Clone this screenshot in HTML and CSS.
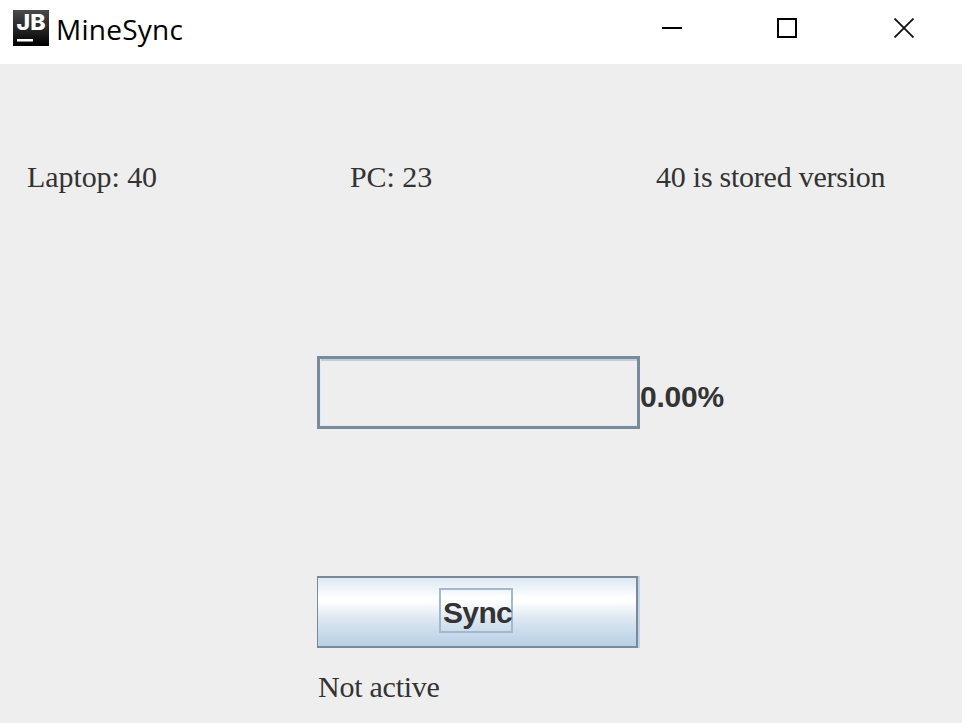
FILE: index.html
```html
<!DOCTYPE html>
<html lang="en">
<head>
<meta charset="utf-8">
<title>MineSync</title>
<link rel="stylesheet" href="styles.css">
</head>
<body>
<div class="window">
  <header class="titlebar">
    <svg class="logo" width="36" height="36" viewBox="0 0 36 36">
      <defs><linearGradient id="g" x1="0" y1="0" x2="0" y2="1"><stop offset="0" stop-color="#4a4a4a"/><stop offset=".65" stop-color="#1c1c1c"/><stop offset="1" stop-color="#000"/></linearGradient></defs>
      <rect width="36" height="36" fill="url(#g)"/>
      <text class="logo-text" x="3.5" y="20" textLength="29" lengthAdjust="spacingAndGlyphs">JB</text>
      <rect x="4" y="29" width="16" height="2.5" fill="#fff"/>
    </svg>
    <h1 class="title">MineSync</h1>
    <div class="controls">
      <svg width="20" height="20" viewBox="0 0 20 20"><path d="M0 10H20" stroke="#000" stroke-width="2"/></svg>
      <svg width="20" height="20" viewBox="0 0 20 20"><rect x="1" y="1" width="18" height="18" fill="none" stroke="#000" stroke-width="2"/></svg>
      <svg width="20" height="20" viewBox="0 0 20 20"><path d="M.5 .5L19.5 19.5M19.5 .5L.5 19.5" stroke="#111" stroke-width="1.8"/></svg>
    </div>
  </header>
  <main class="content">
    <div class="versions"><span>Laptop: 40</span><span>PC: 23</span><span class="stored">40 is stored version</span></div>
    <div class="progress-row"><div class="progress"></div><span class="percent">0.00%</span></div>
    <button class="sync"><span class="focus">Sync</span></button>
    <p class="status">Not active</p>
  </main>
</div>
</body>
</html>
```
FILE: styles.css
```css
* { box-sizing: border-box; }
body { margin: 0; overflow: hidden; }
.window {
  width: 962px;
  height: 723px;
  background: #eee;
  color: #333;
}
.titlebar {
  height: 64px;
  background: #fff;
  display: flex;
  align-items: flex-start;
  padding: 10px 48px 0 13px;
}
.logo { flex: none; }
.logo-text {
  font: 800 22px Inter, sans-serif;
  fill: #fff;
}
.title {
  margin: 0 0 0 7px;
  font: 400 28px/38px "Open Sans", sans-serif;
  letter-spacing: 0.25px;
  color: #000;
}
.controls {
  display: flex;
  gap: 96px;
  margin: 8px 0 0 auto;
}
.controls svg:nth-child(2) { margin: 0 1px 0 -1px; }
.content {
  font: 30px/34px "Liberation Serif", serif;
}
.versions {
  display: grid;
  grid-template-columns: 323px 306px 1fr;
  padding: 96px 0 0 27px;
  letter-spacing: -0.08px;
}
.stored { letter-spacing: -0.24px; }
.progress-row {
  display: flex;
  padding: 162px 0 0 317px;
}
.progress {
  width: 323px;
  height: 73px;
  border: 3px solid #798b9b;
  box-shadow: inset 1px 0 #e2ebf3, inset 0 2px #bdcfe0, inset 0 -1px #e0e8ef;
}
.percent {
  font: bold 30px/34px "Liberation Sans", sans-serif;
  letter-spacing: -0.2px;
  margin-top: 24px;
}
.sync {
  display: flex;
  justify-content: center;
  width: 321px;
  height: 72px;
  margin: 147px 0 0 317px;
  padding: 10px 0 0;
  border: solid #7a8a99;
  border-width: 2px 2px 2px 1px;
  border-radius: 0;
  background: linear-gradient(#dde8f3, #fff 30%, #fff 34%, #dce7f1 60%, #b8cfe5);
  box-shadow: 2px 0 #c3d4e4;
}
.focus {
  width: 74px;
  height: 45px;
  margin-right: 2px;
  padding-left: 2px;
  border: 2px solid #a3b8cc;
  text-align: left;
  font: bold 30px/46px "Liberation Sans", sans-serif;
  letter-spacing: -0.65px;
  color: #333;
}
.status {
  margin: 22px 0 0 318px;
  letter-spacing: -0.25px;
}
```
